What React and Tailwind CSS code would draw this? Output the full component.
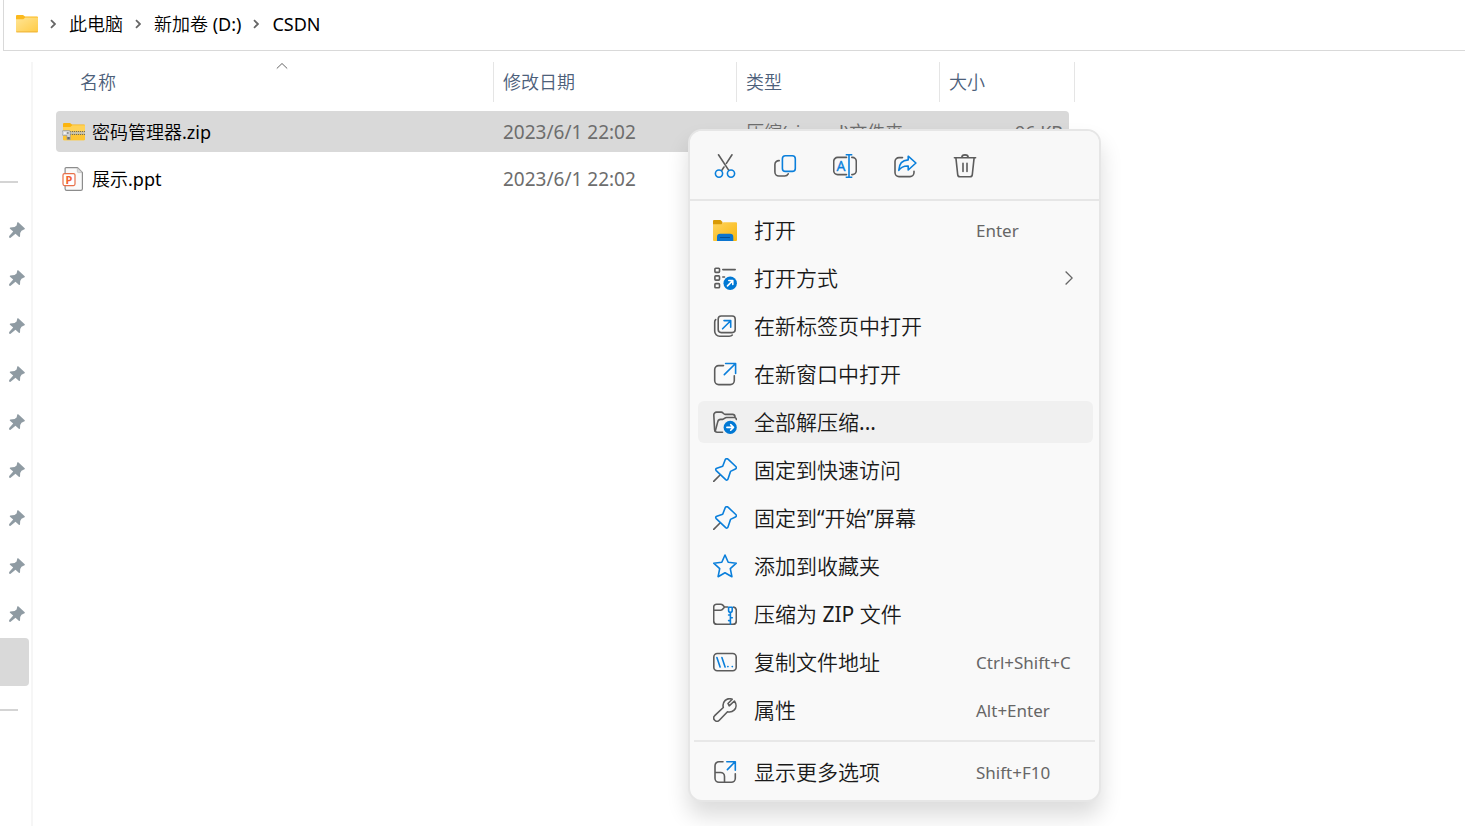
import React, { useState } from 'react';

const GRAY = '#5c5c5c';
const BLUE = '#0a7fdb';

const Icon = ({ children }) => (
  <svg
    className="h-6 w-6 shrink-0"
    viewBox="0 0 24 24"
    fill="none"
    stroke={GRAY}
    strokeWidth="1.6"
    strokeLinecap="round"
    strokeLinejoin="round"
    aria-hidden="true"
  >
    {children}
  </svg>
);

/* Toolbar icons */
const CutIcon = () => (
  <Icon>
    <path d="M5.5.8 15.8 16.4M19 .8l-5.6 8.6M11 13l-2.4 3.6" />
    <circle cx="6" cy="19.6" r="3.6" stroke={BLUE} />
    <circle cx="18" cy="19.6" r="3.6" stroke={BLUE} />
  </Icon>
);

const CopyIcon = () => (
  <Icon>
    <path d="M6.2 6.6A4 4 0 0 0 1.9 10.6V18a4 4 0 0 0 4 4h5.6a4 4 0 0 0 3.7-2.2" />
    <rect x="9.4" y="1.8" width="12.9" height="15.6" rx="3" stroke={BLUE} />
  </Icon>
);

const RenameIcon = () => (
  <Icon>
    <path d="M13.5 3.4H4.7a4 4 0 0 0-4 4v9.2a4 4 0 0 0 4 4h8.8" />
    <path d="M18.8 3.4h.5a4 4 0 0 1 4 4v9.2a4 4 0 0 1-4 4h-.5" />
    <path d="M16 .8v22.6M12.7.8h6.6M12.7 23.4h6.6" stroke={BLUE} strokeLinecap="butt" />
    <text x="7.9" y="16.8" textAnchor="middle" fill={BLUE} stroke={BLUE} strokeWidth=".3" fontSize="14" fontFamily="Noto Sans, sans-serif">
      A
    </text>
  </Icon>
);

const ShareIcon = () => (
  <Icon>
    <path d="M9.5 3.6H6a4 4 0 0 0-4 4v11a4 4 0 0 0 4 4h11a4 4 0 0 0 4-4v-1.4" />
    <path d="M15.2 2.2 22.9 9l-7.7 7v-4c-4.3-.2-7.3 1.2-9.4 4.3.2-6 3.4-10.1 9.4-10.4z" stroke={BLUE} />
  </Icon>
);

const TrashIcon = () => (
  <Icon>
    <path d="M1.4 3.7h21.2M8.8 3.5a3.2 2.6 0 0 1 6.4 0M2.9 3.9l1.8 16.7a2.4 2.4 0 0 0 2.4 2.2h9.8a2.4 2.4 0 0 0 2.4-2.2l1.8-16.7M10 9.3v8.2M14 9.3v8.2" />
  </Icon>
);

/* Menu item icons */
const OpenIcon = () => (
  <Icon>
    <g stroke="none">
      <path d="M0 3a1 1 0 0 1 1-1h6.5l2 2v3H0z" fill="#d99a05" />
      <path d="M0 6.2h8.5l2-2H23a1 1 0 0 1 1 1V22a1 1 0 0 1-1 1H1a1 1 0 0 1-1-1z" fill="url(#openFolder)" />
      <path d="M4 23v-4a3.3 3.3 0 0 1 3.3-3.3H17a3.3 3.3 0 0 1 3.3 3.3v4z" fill="#0c75cf" />
    </g>
    <path d="M7.5 19.5h9" stroke="#064f93" strokeWidth="1.2" />
    <defs>
      <linearGradient id="openFolder" x1="0" y1="0" x2="1" y2="1">
        <stop offset="0" stopColor="#ffd45f" />
        <stop offset="1" stopColor="#f8b70f" />
      </linearGradient>
    </defs>
  </Icon>
);

const OpenWithIcon = () => (
  <Icon>
    <rect x="1.9" y="2.2" width="4.6" height="4.2" rx=".8" />
    <rect x="1.9" y="9.9" width="4.6" height="4.2" rx=".8" />
    <rect x="1.9" y="17.6" width="4.6" height="4.2" rx=".8" />
    <path d="M9.8 3.6h12.4M9.8 11h1.7" />
    <circle cx="17.2" cy="17.2" r="6.7" fill="#0078d4" stroke="none" />
    <path d="m14.5 19.9 5-5M15.8 14.5h4v4" stroke="#fff" />
  </Icon>
);

const NewTabIcon = () => (
  <Icon>
    <rect x="5.2" y="2" width="17" height="16.6" rx="3" />
    <path d="M2.7 5.6C2 6.3 1.7 7 1.7 8v9.2a5 5 0 0 0 5 5h9.5c1.4 0 2.4-.4 3.1-1.2" />
    <path d="m9.6 14.8 7.8-7.8M11 6.6h6.7v6.7" stroke={BLUE} />
  </Icon>
);

const NewWindowIcon = () => (
  <Icon>
    <path d="M10.5 3.6H5.7a4 4 0 0 0-4 4v11a4 4 0 0 0 4 4h11.6a4 4 0 0 0 4-4v-4.8" />
    <path d="m11.3 12.6 11-10.8M12.6 1.5h10v10" stroke={BLUE} />
  </Icon>
);

const ExtractIcon = () => (
  <Icon>
    <path d="M9.5 22.2H4.2a2.6 2.6 0 0 1-2.6-2.4L.8 5a2.8 2.8 0 0 1 2.8-2.9h4.6c1.7 0 2.4 2.3 3.9 2.3h7.6c1.3 0 2.1.8 2.3 2.2" />
    <path d="m2.2 21.2 2.6-9.6c.4-1.5 1.2-2.2 2.7-2.2h2.1c1.5 0 2.3-1.9 3.9-1.9h7.8c1.2 0 2 .8 2.1 2" />
    <circle cx="17.2" cy="17.4" r="6.6" fill="#0078d4" stroke="none" />
    <path d="M13.9 17.4h6.5M17.7 14.6l2.8 2.8-2.8 2.8" stroke="#fff" />
  </Icon>
);

const PinIcon = () => (
  <Icon>
    <path d="m.7 23.4 6.6-6.6" />
    <path
      d="M12.3 1.5c.7-1.1 1.8-1.2 2.7-.3l7.8 7.3c.9.9.7 2-.4 2.5l-4.9 2.4-2.5 7.6c-.4 1.2-1.4 1.4-2.3.6l-9.5-9c-.8-.9-.6-1.9.6-2.3l5.9-2z"
      stroke={BLUE}
    />
  </Icon>
);

const StarIcon = () => (
  <Icon>
    <path d="m12 1 3.2 7.3 8.1.9-6 5.5 1.6 8L12 18.7l-6.9 4 1.6-8-6-5.5 8.1-.9z" stroke={BLUE} />
  </Icon>
);

const ZipFolderIcon = () => (
  <Icon>
    <path d="M14.5 5h-3L9.8 3.1a3 3 0 0 0-2.1-.9H3.6A2.9 2.9 0 0 0 .7 5.1V19a3.2 3.2 0 0 0 3.2 3.2h16.2a3.2 3.2 0 0 0 3.2-3.2V8.2a3.2 3.2 0 0 0-2.6-3.1M1 8.2h6.7c1.6 0 2-1 3.6-3" />
    <path d="M15.6 5.2h3.6v3.2a1.8 1.8 0 0 1-3.6 0zM17.4 10.5v11.7M17.4 13h-1.8M17.4 15.8h1.9M17.4 18.6h-1.8" stroke={BLUE} />
  </Icon>
);

const CopyPathIcon = () => (
  <Icon>
    <rect x=".8" y="3.5" width="22.4" height="17.2" rx="3.5" />
    <path d="m3.9 7.6 3.2 9.4M8.9 7.6l3.2 9.4M14.8 16.6h.2M19.2 16.6h.2" stroke={BLUE} />
  </Icon>
);

const WrenchIcon = () => (
  <Icon>
    <path d="M16.2 7.8 21.4 3c2.3 3.3 2.1 7-.3 9.1-1.9 1.8-4.1 2.2-6.6 1.6l-8.2 8.5a3.2 3.2 0 0 1-4.6-4.5l8.6-8.2C9.6 6.6 10.3 4.2 12.2 2.4c2-1.8 4.6-2.2 7-1.1L15 5.5z" />
  </Icon>
);

const MoreIcon = () => (
  <Icon>
    <path d="M10 1.7H6a4 4 0 0 0-4 4v12.6a4 4 0 0 0 4 4h12.3a4 4 0 0 0 4-4v-4.6M2 12.5h5.5a4 4 0 0 1 4 4v5.7" />
    <path d="m14.4 9.6 7.7-7.8M13.8 1.7h8.5v8.5" stroke={BLUE} />
  </Icon>
);

/* File and navigation icons */
const FolderIcon = () => (
  <svg className="h-[18px] w-[22px] shrink-0" viewBox="0 0 22 18" aria-hidden="true">
    <defs>
      <linearGradient id="folder" x1="0" y1="0" x2="1" y2="1">
        <stop offset="0" stopColor="#ffe596" />
        <stop offset="1" stopColor="#ffcb45" />
      </linearGradient>
    </defs>
    <path d="M0 1a1 1 0 0 1 1-1h6l2 1.5h12a1 1 0 0 1 1 1V6H0z" fill="#fbb91d" />
    <path d="M0 4.3h7.3l2-1.9H22v13.8a1 1 0 0 1-1 1H1a1 1 0 0 1-1-1z" fill="url(#folder)" />
    <path d="M.3 16.9h21.4" stroke="#eaa92c" strokeWidth=".8" />
  </svg>
);

const ZipIcon = () => (
  <svg className="h-[18px] w-6 shrink-0" viewBox="0 0 24 18" aria-hidden="true">
    <path d="M1 1a1 1 0 0 1 1-1h6l2 1.5h12a1 1 0 0 1 1 1V6H1z" fill="#fbb40f" />
    <path d="M1 4h7.3l2-1.7H23v13.9a1 1 0 0 1-1 1H2a1 1 0 0 1-1-1z" fill="#ffd257" />
    <path d="M1 11.5h22v4.7a1 1 0 0 1-1 1H2a1 1 0 0 1-1-1z" fill="#fdc535" />
    <path d="M8 8.5h15M8 11.5h15" stroke="#6f6a58" strokeWidth="1" strokeDasharray="1.2 .8" />
    <path d="M8 10h15" stroke="#d9d4bd" strokeWidth="2" />
    <path d="M8.5 10H23" stroke="#8a8674" strokeWidth="1" strokeDasharray="1 1" />
    <path d="M1.5 7.5h5.3A1.5 1.5 0 0 1 8.3 9v7.5H5v-4H1.5A1.5 1.5 0 0 1 0 11V9a1.5 1.5 0 0 1 1.5-1.5z" fill="#d3d5d8" stroke="#8f9296" strokeWidth=".6" />
    <path d="M1.8 9.3h2v1.5h-2z" fill="#fff" />
    <path d="M5.2 9.3h1.3v1.5H5.2zM5.3 14h2.5v2.3H5.3z" fill="#66686b" />
  </svg>
);

const PptIcon = () => (
  <svg className="h-6 w-6 shrink-0" viewBox="0 0 24 24" fill="none" aria-hidden="true">
    <path d="M3.1 1.6a1 1 0 0 1 1-1h11.4l4.9 5v16.2a1.6 1.6 0 0 1-1.6 1.6H4.7a1.6 1.6 0 0 1-1.6-1.6z" fill="#fafafa" stroke="#8c8c8c" strokeWidth="1.2" />
    <path d="M15.3.8v3.6a1.2 1.2 0 0 0 1.2 1.2h3.7z" fill="#dcdcdc" stroke="#b5b5b5" strokeWidth=".6" />
    <rect x="1" y="6.6" width="12" height="12" rx="1.5" fill="#fff" stroke="#e8704a" strokeWidth="1.2" />
    <text x="7" y="16.6" textAnchor="middle" fill="#f0622f" fontSize="11" fontWeight="700" fontFamily="Noto Sans, sans-serif">
      P
    </text>
  </svg>
);

const PushpinIcon = () => (
  <svg className="h-4 w-4" viewBox="0 0 16 16" fill="#8f9ba3" aria-hidden="true">
    <path d="m9.2.3 6.5 6c.4.6 0 1.2-.7 1.3l-2.5 1.2-1.3 2.3-.2 3.5c-.2.6-.7.6-1.2.2l-3.3-3L1.3 16 0 15.6l.2-1.5 4-4.7L1 6.7c-.4-.5-.3-1 .4-1.1l4.2-.7 2-1.5L8.3.5c.2-.4.6-.5.9-.2z" />
  </svg>
);

const Crumb = ({ children }) => (
  <li className="flex items-center">
    <svg className="ml-3 mr-[13px] h-2.5 w-1.5" viewBox="0 0 6 10" fill="none" stroke="#666" strokeWidth="1.8" aria-hidden="true">
      <path d="m1 1.2 4 3.8-4 3.8" />
    </svg>
    <a href="#" className="block">{children}</a>
  </li>
);

const toolbar = [
  { label: '剪切', icon: CutIcon },
  { label: '复制', icon: CopyIcon },
  { label: '重命名', icon: RenameIcon },
  { label: '共享', icon: ShareIcon },
  { label: '删除', icon: TrashIcon },
];

const menuItems = [
  { label: '打开', icon: OpenIcon, shortcut: 'Enter' },
  { label: '打开方式', icon: OpenWithIcon, submenu: true },
  { label: '在新标签页中打开', icon: NewTabIcon },
  { label: '在新窗口中打开', icon: NewWindowIcon },
  { label: '全部解压缩...', icon: ExtractIcon },
  { label: '固定到快速访问', icon: PinIcon },
  { label: '固定到“开始”屏幕', icon: PinIcon },
  { label: '添加到收藏夹', icon: StarIcon },
  { label: '压缩为 ZIP 文件', icon: ZipFolderIcon },
  { label: '复制文件地址', icon: CopyPathIcon, shortcut: 'Ctrl+Shift+C' },
  { label: '属性', icon: WrenchIcon, shortcut: 'Alt+Enter' },
];

const files = [
  { name: '密码管理器.zip', icon: ZipIcon, date: '2023/6/1 22:02', type: '压缩(zipped)文件夹', size: '96 KB' },
  { name: '展示.ppt', icon: PptIcon, date: '2023/6/1 22:02', type: '', size: '' },
];

const MenuItem = ({ item, active, onHover }) => {
  const ItemIcon = item.icon;
  return (
    <button
      type="button"
      role="menuitem"
      onMouseEnter={onHover}
      className={`flex h-[42px] w-full items-center rounded-md pl-[15px] text-left ${active ? 'bg-[#f0f0f0]' : ''}`}
    >
      <ItemIcon />
      <span className="ml-[17px] flex-1 whitespace-nowrap text-[21px] leading-7 text-[#1a1a1a]">{item.label}</span>
      {item.shortcut && (
        <span className="w-[117px] whitespace-nowrap pt-0.5 text-[17px] leading-6 text-[#666]">{item.shortcut}</span>
      )}
      {item.submenu && (
        <svg className="mr-5 h-4 w-2" viewBox="0 0 8 16" fill="none" stroke="#666" strokeWidth="1.3" aria-hidden="true">
          <path d="M.6 1.5 7.2 8 .6 14.5" />
        </svg>
      )}
    </button>
  );
};

const ContextMenu = () => {
  const [active, setActive] = useState('全部解压缩...');
  const more = { label: '显示更多选项', icon: MoreIcon, shortcut: 'Shift+F10' };

  return (
    <div
      role="menu"
      className="absolute left-[688px] top-[129px] w-[413px] rounded-[14px] border-2 border-[#e6e6e6] bg-[#f9f9f9] shadow-[0_14px_22px_rgba(0,0,0,0.14)]"
    >
      <div className="flex h-[70px] items-center gap-9 rounded-t-xl border-b-2 border-[#e6e6e6] bg-[#f8f8f8] px-[23px] pt-0.5">
        {toolbar.map(({ label, icon: ToolIcon }) => (
          <button key={label} type="button" aria-label={label}>
            <ToolIcon />
          </button>
        ))}
      </div>
      <div className="flex flex-col gap-1.5 pb-[9px] pl-2 pr-1.5 pt-2">
        {menuItems.map((item) => (
          <MenuItem
            key={item.label}
            item={item}
            active={active === item.label}
            onHover={() => setActive(item.label)}
          />
        ))}
      </div>
      <hr className="mx-1 border-t-2 border-[#e8e8e8]" />
      <div className="pb-[7px] pl-2 pr-1.5 pt-[9px]">
        <MenuItem item={more} active={active === more.label} onHover={() => setActive(more.label)} />
      </div>
    </div>
  );
};

const Sidebar = () => (
  <aside className="mt-[11px] w-[33px] shrink-0 border-r-2 border-[#f6f6f6] pt-[119px]">
    <hr className="w-[18px] border-t-2 border-[#d4d4d4]" />
    <ul className="mt-[23px]">
      {[1, 2, 3, 4, 5, 6, 7, 8, 9].map((n) => (
        <li key={n} className="flex h-12 items-center pl-[9px]">
          <PushpinIcon />
        </li>
      ))}
    </ul>
    <div className="h-12 w-[29px] rounded-r-sm bg-[#d9d9d9]" />
    <hr className="mt-[23px] w-[18px] border-t-2 border-[#d4d4d4]" />
  </aside>
);

const FileTable = () => (
  <div className="ml-[23px] flex-1 pt-[11px]">
    <table className="w-[1019px] table-fixed border-separate border-spacing-0 text-left">
      <colgroup>
        <col className="w-[438px]" />
        <col className="w-[243px]" />
        <col className="w-[203px]" />
        <col className="w-[135px]" />
      </colgroup>
      <thead className="text-lg leading-6 text-[#4c607a]">
        <tr className="h-10">
          <th scope="col" className="border-r border-[#e5e5e5] pl-6 font-normal">
            <div className="relative">
              名称
              <svg className="absolute -top-2 left-[196px] h-2 w-3" viewBox="0 0 12 8" fill="none" stroke="#666" aria-hidden="true">
                <path d="m.8 6.5 5.2-5 5.2 5" />
              </svg>
            </div>
          </th>
          <th scope="col" className="border-r border-[#e5e5e5] pl-[9px] font-normal">修改日期</th>
          <th scope="col" className="border-r border-[#e5e5e5] pl-[9px] font-normal">类型</th>
          <th scope="col" className="border-r border-[#e5e5e5] pl-[9px] font-normal">大小</th>
        </tr>
      </thead>
      <tbody className="text-lg leading-6 text-[#6d6d6d] before:block before:h-[9px]">
        {files.map((file, i) => {
          const FileIcon = file.icon;
          const bg = i === 0 ? 'bg-[#d9d9d9]' : '';
          return (
            <tr key={file.name}>
              <td className="pb-1.5">
                <div className={`flex h-[41px] items-center rounded-l-sm pl-1.5 ${bg}`}>
                  <FileIcon />
                  <span className="ml-1.5 text-black">{file.name}</span>
                </div>
              </td>
              <td className="pb-1.5">
                <div className={`flex h-[41px] items-center pl-[9px] text-[19px] leading-6 ${bg}`}>{file.date}</div>
              </td>
              <td className="pb-1.5">
                <div className={`flex h-[41px] items-center pl-[9px] ${bg}`}>{file.type}</div>
              </td>
              <td className="pb-1.5 pr-1.5">
                <div className={`flex h-[41px] items-center justify-end rounded-r-sm pr-1.5 ${bg}`}>{file.size}</div>
              </td>
            </tr>
          );
        })}
      </tbody>
    </table>
  </div>
);

export default function App() {
  return (
    <div className="relative flex min-h-screen flex-col overflow-hidden bg-white font-['Noto_Sans','Noto_Sans_CJK_SC_DemiLight','Noto_Sans_CJK_SC',sans-serif]">
      <nav aria-label="路径" className="ml-[3px] flex h-[51px] items-center border-b border-l border-[#d9d9d9] pb-0.5 pl-3">
        <FolderIcon />
        <ol className="flex text-lg leading-6 text-black">
          <Crumb>此电脑</Crumb>
          <Crumb>新加卷 (D:)</Crumb>
          <Crumb>CSDN</Crumb>
        </ol>
      </nav>
      <main className="flex flex-1">
        <Sidebar />
        <FileTable />
      </main>
      <ContextMenu />
    </div>
  );
}
